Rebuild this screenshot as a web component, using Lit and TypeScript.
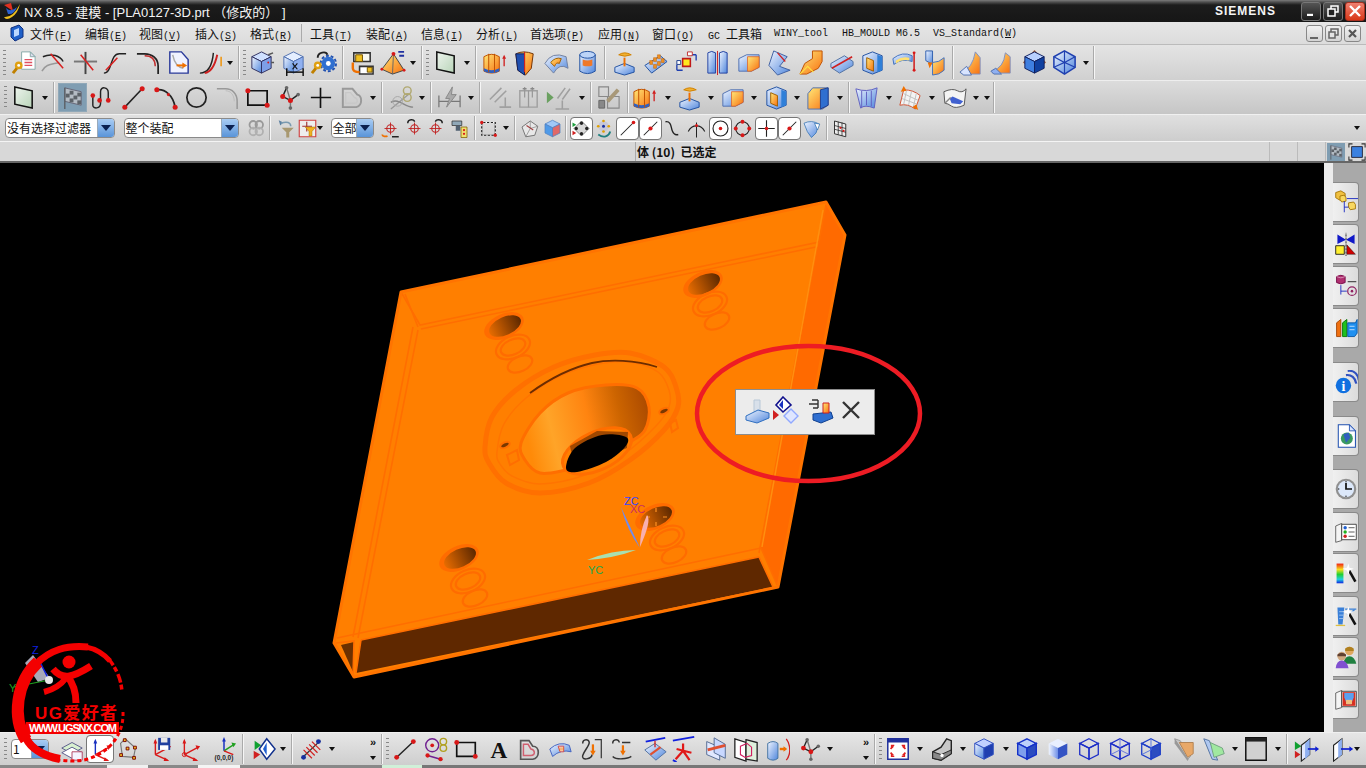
import { LitElement, html, svg, css } from 'lit';
import { customElement } from 'lit/decorators.js';

const ln = (d: string, c = '#222', w = 1.5) => svg`<path d=${d} fill="none" stroke=${c} stroke-width=${w}/>`;
const fl = (d: string, c: string, s = 'none', w = 1) => svg`<path d=${d} fill=${c} stroke=${s} stroke-width=${w}/>`;
const dot = (x: number, y: number, r = 2, c = '#d81818') => svg`<circle cx=${x} cy=${y} r=${r} fill=${c}/>`;
const cube = (t: string, l: string, r: string, s = '#2030b0', w = 1) => svg`
  ${fl('M14 3 24 8 14 13 4 8Z', t, s, w)}${fl('M4 8 14 13V25L4 20Z', l, s, w)}${fl('M24 8 14 13V25L24 20Z', r, s, w)}`;
const key = svg`${dot(8, 17, 4, '#e0a010')}${dot(8, 17, 1.5, '#fff')}${ln('M6 20 2 25', '#c08000', 3)}`;
const plane = svg`${fl('M5 3 23 7V25L5 21Z', 'url(#gn)', '#111', 1.6)}`;
const sel = svg`${ln('M14 6V22M6 14H22', '#c02020', 1.2)}<circle cx="14" cy="14" r="5" fill="none" stroke="#c02020" stroke-width="1.4"/>`;
const extrude = svg`${fl('M3 8Q11 3 19 8V23Q11 27 3 23Z', 'url(#or)', '#c05000')}${fl('M3 23Q11 27 19 23V20Q11 24 3 20Z', '#3060c0')}${ln('M8 5V24M14 5V24', '#c05000', 1)}${ln('M24 18V8', '#d02020', 1.4)}${fl('M22 10 24 6 26 10Z', '#d02020')}`;
const boss = svg`${fl('M4 19 14 15 24 19V24L14 27 4 24Z', 'url(#bl)', '#2050a0')}${fl('M8 6Q14 2 21 6 14 9 8 6Z', '#f0b030', '#d08000')}${ln('M14 18V9', '#f07000', 2)}`;
const shell = svg`${fl('M14 3 24 7V22L14 26 4 22V7Z', 'url(#bl)', '#2050a0')}${fl('M8 9 15 12V23L8 20Z', 'url(#or)', '#a06000')}${fl('M19 6 24 8V22L19 24Z', '#2f7fd8')}`;
const offset = svg`${fl('M4 10 12 6H25V19L17 23H4Z', 'url(#bl)', '#5070b0')}${fl('M13 8H25V19L17 23H13Z', 'url(#or)', '#e06020', .8)}`;
const lface = svg`${fl('M5 22Q16 20 18 4L23 8V25H5Z', 'url(#or)', '#8090c0')}${fl('M3 23 8 20 14 26H6Z', '#90b0f0', '#5070b0')}`;
const triad = (x = '#d81818', y = '#d81818', z = '#d81818') => svg`${ln('M9 20V5', z, 1.5)}${fl('M7 8 9 3 11 8Z', z)}${ln('M9 20 24 12', y, 1.5)}${fl('M21 10 26 11 23 15Z', y)}${ln('M9 20 22 26', x, 1.5)}${fl('M19 23 24 27 18 27Z', x)}`;
const zig = svg`${ln('M12 4 8 13 16 17 24 11', '#222', 1.5)}${ln('M12 4 16 17 16 25', '#777', 1.5)}${dot(8, 13, 2.6)}${dot(16, 17, 2.6)}${dot(12, 4, 1.9, '#666')}${dot(24, 11, 1.9, '#666')}${dot(16, 25, 1.9, '#666')}`;
const door = (c: unknown) => svg`${fl('M2 7 9 4V24L2 26Z', '#f4f4f4', '#555')}${fl('M9 5H26V23H9Z', '#fff', '#333')}${c}`;
const wand = svg`${ln('M17 10 25 24', '#111', 3)}${fl('M17 3 18 8 23 9 18 11 17 16 15 11 10 9 15 8Z', '#fff')}`;

const I: Record<string, unknown> = {
  keysheet: svg`${fl('M11 3H20L25 8V21H11Z', '#fff', '#8aa')}${fl('M20 3V8H25Z', '#dde', '#8aa')}${ln('M14 11H22M14 14H22M14 17H22', '#e05060', 1.4)}${key}`,
  trim1: svg`${ln('M3 8C12 4 21 7 24 13')}${ln('M2 23C6 15 13 16 20 14', '#999')}${ln('M11 5 24 20', '#d82020', 1.6)}`,
  trim2: svg`${ln('M14 3V26', '#444', 2)}${ln('M2 13H26', '#777', 2)}${ln('M9 6 22 22', '#d82020', 1.6)}`,
  trim3: svg`${ln('M3 25C12 25 9 5 19 5H26')}${ln('M5 22 17 9', '#d82020', 1.6)}`,
  fillet: svg`${ln('M2 5H10C18 5 24 10 24 18V26', '#222', 1.8)}${ln('M10 7C17 7 21 11 21 18', '#c03030')}`,
  sketchp: svg`${fl('M5 3H17L24 11V25H5Z', '#f0f2ff', '#2a3a9a', 1.5)}${ln('M8 6C10 16 14 19 19 20', '#aaa')}${ln('M12 17H19', '#f07000', 2)}${fl('M18 14 23 17 18 20Z', '#f07000')}`,
  curveoff: svg`${ln('M3 25C12 25 16 15 17 4')}${ln('M8 25C15 24 19 15 21 6', '#d02020', 2)}${ln('M25 8V18', '#f09000', 1.5)}`,
  cubeedit: svg`${cube('#cfe0ff', 'url(#bl)', '#7d9fe8', '#303060')}${ln('M21 6 26 4M24 14H27', '#555')}${dot(21, 14, 1)}`,
  cubedim: svg`${cube('#e4eeff', 'url(#bl)', '#8fb0f0', '#5070b0')}${ln('M7 24H24', '#111')}${ln('M7 20V28M24 20V28', '#111', 1.5)}${ln('M13 15 18 21M18 15 13 21', '#111', 1.2)}`,
  gearkey: svg`${dot(19, 15, 7, '#2f6fd0')}${dot(19, 15, 2.5, '#fff')}<circle cx="19" cy="15" r="8" fill="none" stroke="#2050b0" stroke-width="2" stroke-dasharray="3 2"/>${key}${ln('M8 9C8 3 17 2 18 6', '#222', 2)}`,
  paste: svg`${fl('M6 4H23V13H6Z', '#f8f8f0', '#333', 1.6)}${fl('M8 6H15V13H8Z', '#f0c020', '#705000')}${fl('M12 18H26V26H12Z', '#fff', '#333', 1.6)}${fl('M20 19H25V24H20Z', '#f0c020', '#705000')}${ln('M5 14V20C5 23 8 24 12 24', '#f07000', 2.5)}`,
  pyramid: svg`${fl('M15 5 26 22 14 26 3 21Z', 'url(#or)', '#444')}${ln('M15 5 14 26', '#666', 1)}${dot(15, 5, 2)}${dot(3, 21, 1.5)}${dot(26, 22, 1.5)}${ln('M20 3H26M21 7H26', '#2030a0', 2)}`,
  plane,
  extrude,
  revolve: svg`${fl('M4 5Q12 1 22 5L20 20 14 27 6 22Z', 'url(#or)', '#703000')}${fl('M4 5H13V27L6 22Z', '#2050b0', '#102060')}${ln('M13 3V24', '#d02020', 1.2)}`,
  sweepf: svg`${fl('M3 15Q10 2 25 8L27 20Q18 14 12 25Z', 'url(#bl)', '#7080a0')}${fl('M9 14Q14 8 20 10L18 15Q15 13 13 18Z', 'url(#or)', '#a06000')}`,
  cyl: svg`${fl('M6 6Q14 1 22 6V23Q14 28 6 23Z', 'url(#bl)', '#2050a0')}<ellipse cx="14" cy="6" rx="8" ry="3.5" fill="#bcd4f8" stroke="#2050a0"/>${fl('M9 11Q14 13 19 11V17Q14 19 9 17Z', '#f07828')}`,
  boss,
  pads: svg`${fl('M3 17 19 7 26 13 10 25Z', 'url(#bl)', '#2050a0')}${[[8, 13], [12, 10], [16, 7], [12, 17], [16, 14], [20, 11]].map(([x, y]) => svg`${fl(`M${x} ${y + 3}V${y - 1}H${x + 3}V${y + 3}Z`, '#f09020', '#c06000', .5)}`)}`,
  pattern: svg`${fl('M10 10H18V18H10Z', '#ffe820', '#c01818', 1.6)}${ln('M4 22V16M4 22H10M24 6V12M24 6H18', '#2040b0', 1.4)}${fl('M15 3H20V7H15Z', '#fff', '#c03030')}${fl('M4 12H8V16H4Z', '#fff', '#204090')}`,
  mirror: svg`${fl('M4 4Q8 1 12 4V25H4Z', 'url(#bl)', '#2040a0')}${fl('M16 4Q20 1 24 4V25H16Z', 'url(#bl)', '#2040a0')}${ln('M14 2V27', '#d02020', 1)}`,
  offset,
  sweep: svg`${fl('M8 2 22 8 14 18 25 22 12 27 3 17Z', 'url(#bl)', '#4060a0')}${ln('M12 4 20 13', '#d02020', 1.4)}`,
  orangel: svg`${fl('M15 2H25V13L21 20 9 26 2 26 7 15 15 10Z', 'url(#or)', '#c05000')}${ln('M2 26 10 18 16 24', '#ffe040', 1.2)}`,
  platecut: svg`${fl('M3 15 17 7 26 13V17L12 25 3 19Z', 'url(#bl)', '#5070a0')}${ln('M4 20 25 8', '#d02020', 1.6)}`,
  shell,
  tworib: svg`${fl('M3 10Q13 2 23 7V13Q13 9 4 16Z', 'url(#bl)', '#4070c0')}${fl('M6 12Q13 7 20 9V12Q13 10 6 15Z', '#ffe070')}${ln('M25 4V22', '#d02020', 1.6)}${dot(25, 4, 1.5)}${dot(25, 22, 1.5)}`,
  sheet: svg`${fl('M6 2H13V16L6 12Z', 'url(#bl)', '#3060b0')}${fl('M13 14Q20 14 25 9V22Q20 27 13 27Z', 'url(#or)', '#4070c0')}${fl('M8 14H13L10 20Z', '#f07000')}`,
  cface1: svg`${fl('M5 24Q16 20 19 3L24 9V26H10Z', 'url(#or)', '#8090c0')}${fl('M3 24 10 18 15 27H7Z', '#d8e4ff', '#5070b0')}`,
  cface2: lface,
  cubed: svg`${fl('M14 2 25 14 14 22 3 14Z', 'none', '#a06040', 1.4)}${cube('#b8d0ff', '#3f7fe0', '#1040a0', '#102060')}`,
  globe: svg`${fl('M14 2 25 8V19L14 26 3 19V8Z', 'url(#bl)', '#2040b0', 1.6)}${ln('M3 8 14 14 25 8M14 14V26M3 19 14 14 25 19M14 2V14', '#2040b0', 1.2)}`,
  checker: svg`${fl('M6 4 23 8V22L6 18Z', '#b4bcc4', '#667')}${[0, 1, 2, 3].flatMap((a) => [0, 1, 2].map((b) => svg`${(a + b) % 2 ? fl(`M${7 + a * 4} ${6 + b * 4 + a}h4v4h-4z`, '#5c6268') : ''}`))}${ln('M6 4V26', '#5c6268', 1.5)}`,
  scurve: svg`${ln('M5 12V22C5 26 13 26 13 20V8C13 2 21 3 21 9V18')}${dot(5, 12, 2.4)}${dot(12, 17, 2.4)}${dot(21, 17, 2.4)}`,
  line: svg`${ln('M5 24 23 5', '#222', 1.6)}${dot(5, 24, 2.6)}${dot(23, 5, 2.6)}`,
  arc: svg`${ln('M5 6C14 5 22 12 24 24', '#222', 1.8)}${dot(5, 6, 2.6)}${dot(24, 24, 2.6)}${dot(17, 11, 1.6)}`,
  circle: svg`<circle cx="14" cy="14" r="10" fill="none" stroke="#222" stroke-width="1.8"/>`,
  filletg: svg`${ln('M3 5H12C19 5 24 10 24 18V26', '#999', 1.6)}${ln('M12 7C17 7 21 11 21 18', '#bbb', 1)}`,
  rect: svg`${fl('M4 7H24V22H4Z', 'none', '#111', 1.8)}${dot(4, 7, 2.6)}${dot(24, 22, 2.6)}`,
  zig,
  plus: svg`${ln('M14 4V25M4 14H25', '#111', 1.7)}`,
  heartg: svg`${fl('M5 5H15L20 11C25 12 26 22 19 24H5Z', 'none', '#999', 2)}${fl('M8 9H13L17 14C21 15 21 20 17 20H8Z', 'none', '#c8c8c8', 1.4)}`,
  constrg: svg`${ln('M3 26 22 10', '#999', 1.4)}${ln('M3 19C11 14 17 24 26 24', '#888')}<circle cx="20" cy="7" r="4" fill="none" stroke="#b0a870" stroke-width="1.5"/><circle cx="20" cy="14" r="4" fill="none" stroke="#b0a870" stroke-width="1.5"/><circle cx="10" cy="18" r="5" fill="none" stroke="#a8a8a8"/>`,
  dimg: svg`${ln('M3 12V24M25 12V24M3 18H25', '#777', 1.3)}${fl('M17 3 10 15H14L11 24 21 11H16Z', '#aaa', '#888')}`,
  parg: svg`${ln('M4 16 16 4M9 19 21 7M14 24H26M20 24V14', '#a0a0a0', 1.6)}`,
  symg: svg`${fl('M5 7H23V24H5Z', 'none', '#a0a0a0', 1.5)}${ln('M10 3V14M18 3V14M14 7V24', '#999', 1.3)}${ln('M8 5H12M16 5H20', '#888')}`,
  autog: svg`${fl('M3 8 10 14 3 20Z', '#6aa060')}${ln('M14 15 22 4M19 16 27 5M12 26H26M19 26V17', '#a0a0a0', 1.6)}`,
  convg: svg`${fl('M4 3H14V13H4Z', 'none', '#888', 1.2)}${fl('M13 13H25V25H13Z', 'none', '#888', 1.2)}${fl('M4 17H10V25H4Z', '#888', '#666')}${ln('M13 18 24 6', '#a89878', 4)}`,
  cubeface: svg`${fl('M3 10 8 4H24V22L18 26H3Z', 'url(#or)', '#5070b0')}${fl('M16 6 24 4V22L16 26Z', '#2f6fd0', '#204090')}`,
  ruled: svg`${fl('M3 5Q14 9 25 4L22 25Q12 21 8 25Z', 'url(#bl)', '#6060c0')}${ln('M9 7V24M14 8V22M19 7V23', '#6060c0', 1)}`,
  grid: svg`${fl('M8 6Q18 6 25 12L20 26Q12 20 4 22Z', '#f4f4f4', '#d05030')}${ln('M8 10 23 17M6 15 22 21M11 6 8 21M16 8 13 22M21 10 18 24', '#c0c0c0', 1)}${fl('M5 8 8 2 11 7Z', '#f07000')}${fl('M17 24 23 27 21 21Z', '#f07000')}`,
  surf: svg`${fl('M3 8Q12 4 17 7T26 5L24 22Q15 26 11 23T4 20Z', '#f4f4f4', '#555')}${fl('M9 15 12 13 23 18 20 21 11 20Z', '#4060d0')}${ln('M4 20 10 14', '#888')}`,
  filterg: svg`<circle cx="11" cy="9" r="5" fill="none" stroke="#999" stroke-width="2.4"/><circle cx="19" cy="9" r="5" fill="none" stroke="#999" stroke-width="2.4"/><circle cx="11" cy="18" r="5" fill="none" stroke="#b0b0b0" stroke-width="2.4"/><circle cx="19" cy="18" r="5" fill="none" stroke="#b0b0b0" stroke-width="2.4"/>`,
  undof: svg`${fl('M5 3 11 6 7 10Z', '#5a7fa0')}${ln('M8 7C16 4 21 6 21 11', '#7a9ab0', 2)}${fl('M9 13H25L19 19V26H15V19Z', '#a89870')}`,
  snapf: svg`${fl('M3 3H25V25H3Z', '#eee', '#d04040', 1.5)}${ln('M7 11H20M13 5V18', '#a03030')}${fl('M11 12H25L20 18V24H16V18Z', '#f0b020', '#a07000', .6)}`,
  sel1: svg`${sel}${ln('M3 22C3 25 8 25 10 24', '#f07000', 2.4)}${ln('M16 25H25', '#222', 2)}`,
  sel2: svg`${sel}${ln('M5 7C5 1 14 1 14 5', '#222', 2)}`,
  sel3: svg`${sel}${ln('M23 7C23 1 14 1 14 5', '#222', 2)}`,
  assy: svg`${fl('M4 4H17V10H4Z', '#90a8b8', '#333')}${fl('M9 10H15V17H9Z', '#506070')}${fl('M16 12H24V26H16Z', '#f0e070', '#806000')}${dot(20, 16, 1.5)}${dot(20, 21, 1.5)}`,
  box: svg`${fl('M5 6H23V23H5Z', 'none', '#222', 1.6)}<path d="M5 6H23V23H5Z" fill="none" stroke="#fff" stroke-width="1.6" stroke-dasharray="2 3"/>${dot(5, 6, 2.2)}${dot(23, 23, 2.2)}`,
  sphere: svg`${fl('M4 12 15 4 25 11 21 23 9 25Z', '#e8e8e8', '#555')}${ln('M15 4 15 14 9 25M15 14 25 11', '#888', 1)}${ln('M10 10 19 16', '#a04040', 1.5)}`,
  bluebox: svg`${cube('#a0c8f8', '#4f9ae8', '#e06868', '#5080c0')}`,
  snapall: svg`${fl('M14 4 24 14 14 24 4 14Z', '#d8d8d8', '#666')}${dot(14, 7, 2.2, '#222')}${dot(14, 21, 2.2, '#222')}${dot(7, 14, 2.2, '#222')}${dot(21, 14, 2.2, '#222')}${fl('M2 6 7 9 2 12Z', '#20a040')}${fl('M2 17 7 20 2 23Z', '#d02020')}`,
  snapreset: svg`${dot(14, 11, 7, '#c8c8d8')}${dot(14, 11, 2, '#1830a0')}${dot(14, 4, 1.8, '#e0a000')}${dot(21, 11, 1.8, '#e0a000')}${dot(14, 18, 1.8, '#e0a000')}${dot(7, 11, 1.8, '#e0a000')}${ln('M7 22C14 27 21 25 23 18', '#208080', 2.4)}`,
  linesnap: svg`${ln('M5 23 22 6', '#222', 1.4)}${dot(22, 6, 2.4)}`,
  midsnap: svg`${ln('M5 23 23 5', '#222', 1.4)}${dot(14, 14, 2.8)}`,
  curve: svg`${ln('M6 5C14 4 13 12 15 17S20 23 23 22', '#222', 1.8)}`,
  tang: svg`${ln('M14 6V26', '#222', 1.4)}${ln('M3 18C8 8 20 8 25 18', '#222', 1.4)}${dot(14, 10, 2)}`,
  center: svg`<circle cx="14" cy="14" r="10" fill="#fff" stroke="#222" stroke-width="1.5"/>${dot(14, 14, 2.4)}`,
  quad: svg`<circle cx="14" cy="14" r="9" fill="none" stroke="#222" stroke-width="1.5"/>${dot(14, 5, 2.6)}${dot(14, 23, 2.6)}${dot(5, 14, 2.6)}${dot(23, 14, 2.6)}`,
  inter: svg`${ln('M14 3V25M3 14H25', '#222', 1.5)}${dot(14, 14, 2.4)}`,
  face: svg`${fl('M4 7Q14 2 24 8L20 20 14 26Q8 20 4 7Z', 'url(#bl)', '#3070b0')}${fl('M18 7 25 8 22 16Z', '#fff', '#3070b0')}`,
  gridp: svg`${fl('M6 4 21 8V25L6 21Z', '#eee', '#222', 1.2)}${ln('M11 5V22M16 6V24M6 10 21 14M6 15 21 19', '#222', 1)}${dot(14, 13, 1.5)}${dot(18, 17, 1.5)}`,
  layers: svg`${fl('M3 13 14 7 25 13 14 19Z', '#d8f0d0', '#558')}${fl('M3 18 14 12 25 18 14 24Z', '#fff', '#558')}${fl('M14 17H25V26H14Z', '#f4f4ff', '#b04060')}`,
  wcsmove: svg`${triad('#e01818', '#e01818', '#1830c0')}`,
  wcsnet: svg`${fl('M6 8 11 3 22 13 20 23 8 22Z', 'none', '#777', 1.2)}${fl('M9 3H12V6H9ZM20 11H23V14H20ZM19 22H22V25H19ZM5 19H8V22H5ZM12 12H15V15H12Z', '#f0c020', '#700')}`,
  wcssave: svg`${triad()}${fl('M12 2H25V15H12Z', '#2040a0')}${fl('M15 2H22V7H15Z', '#e8e8e8')}${fl('M14 10H23V15H14Z', '#fff')}`,
  wcsorient: svg`${triad()}<circle cx="9" cy="20" r="2.2" fill="none" stroke="#d81818"/>`,
  wcsabs: svg`${ln('M14 16V4', '#1830c0', 1.6)}${fl('M12 6 14 1 16 6Z', '#1830c0')}${ln('M14 16 25 9', '#20a020', 1.6)}${fl('M22 7 27 8 24 12Z', '#20a020')}${ln('M14 16 24 20', '#d81818', 1.4)}<text x="14" y="26" text-anchor="middle" font-size="7" font-weight="700" font-family="Liberation Sans" fill="#222">(0,0,0)</text>`,
  flipv: svg`${fl('M5 5 12 10 5 15Z', '#10a030')}${fl('M4 16 11 20 4 25Z', '#d02020')}${fl('M18 3 27 14 18 25 10 14Z', '#fff', '#10308c', 1.6)}${fl('M18 7 14 14 18 21Z', '#2060d0')}`,
  hatch: svg`${ln('M4 24 24 5', '#333', 1.4)}${ln('M6 15 15 24M9 12 18 21M12 9 21 18M15 6 24 15', '#d02020', 1.3)}${dot(6, 23, 2.6, '#1830a0')}${dot(22, 6, 2.6, '#1830a0')}`,
  linep: svg`${ln('M4 24 24 5', '#222', 1.5)}${dot(5, 23, 2.6)}${dot(23, 6, 2.6)}`,
  sketchc: svg`<circle cx="11" cy="10" r="7" fill="none" stroke="#702090" stroke-width="1.5"/>${dot(11, 10, 2)}<circle cx="23" cy="6" r="3.5" fill="none" stroke="#b0a020" stroke-width="1.5"/><circle cx="23" cy="13" r="3.5" fill="none" stroke="#b0a020" stroke-width="1.5"/>${ln('M6 21 20 25', '#702090', 1.6)}${dot(6, 21, 2.3)}${dot(20, 25, 2.3)}`,
  letterA: svg`<text x="14" y="24" text-anchor="middle" font-family="Liberation Serif" font-weight="700" font-size="25" fill="#111">A</text>`,
  heart: svg`${fl('M5 5H14L18 11C26 11 26 24 18 25H5Z', 'none', '#555', 1.8)}${fl('M8 9H13L16 14C21 15 21 21 16 21H8Z', 'none', '#d06070', 1.6)}`,
  flag: svg`${fl('M3 14Q13 5 24 10L26 17Q15 14 6 22Z', 'url(#bl)', '#4060c0')}${fl('M12 11 18 11 18 17 14 17Z', '#fff', '#d04040')}${ln('M13 13H18M13 15H18', '#f07000', 1)}`,
  split1: svg`${ln('M4 8C4 3 11 3 11 7S6 15 4 21 14 25 14 20', '#333', 1.6)}${ln('M17 4H24V24', '#333', 1.3)}${ln('M15 9V18', '#f07000', 2.4)}${fl('M12 16 15 21 18 16Z', '#f07000')}`,
  split2: svg`${ln('M4 8C4 3 11 3 11 7', '#333', 1.6)}${ln('M14 7H23M4 22C8 26 20 25 24 22', '#333', 1.6)}${ln('M15 10V18', '#f07000', 2.4)}${fl('M12 16 15 21 18 16Z', '#f07000')}`,
  cutface: svg`${ln('M4 6 25 2', '#1020e0', 2)}${fl('M3 15 14 8 26 17 15 26Z', 'url(#bl)', '#5070a0')}${ln('M9 20 20 12', '#e05030', 2.4)}${ln('M14 5V12', '#d02020', 1.4)}`,
  cutcross: svg`${ln('M2 5 25 1', '#1020e0', 2)}${ln('M13 8V17M5 25 13 16 20 26M6 14 22 18', '#e01818', 2.4)}${ln('M2 26 6 28', '#1020e0', 2)}`,
  planes2: svg`${fl('M4 6 18 12V26L4 20Z', '#e0e8ff', '#506890')}${fl('M12 2 24 9V24L12 18Z', '#c8d8ff', '#506890')}${ln('M5 15 24 10', '#e05030', 3)}`,
  books2: svg`${fl('M2 3 14 7V27L2 23Z', '#fff', '#222', 1.4)}${fl('M14 4 26 7V27L14 25Z', '#dff0dc', '#222', 1.4)}${fl('M8 11 15 8 20 12V21L13 23 8 20Z', 'none', '#d02060', 1.2)}`,
  cyl2: svg`${fl('M4 8Q10 4 15 8V24Q10 28 4 24Z', 'url(#bl)', '#4070a0')}${ln('M17 14H23', '#f07000', 2.6)}${fl('M21 11 25 14 21 17Z', '#f07000')}${ln('M24 3C29 10 29 20 24 26', '#d02020', 1.4)}`,
  fit: svg`${fl('M3 3H25V25H3Z', '#fff', '#20309c', 1.6)}${fl('M3 3H25V7H3Z', '#20309c')}${ln('M9 11 6 14M19 11 22 14M9 21 6 18M19 21 22 18', '#e02020', 1.8)}${ln('M10 10H7V13M18 10H21V13M10 22H7V19M18 22H21V19', '#e02020', 1.4)}`,
  camera: svg`${fl('M4 17 13 12 19 3 24 5V19L13 26 4 24Z', '#c8c8c8', '#222', 1.5)}${fl('M4 17 13 20 24 15V19L13 26 4 24Z', '#888', '#222')}${dot(14, 21, 1.8, '#fff')}`,
  cubeshade: cube('#c0d0ff', 'url(#bl)', '#1f3fb0', '#3050c0'),
  cubeedges: cube('#bcd0fa', '#7f9fec', '#2b4cc0', '#1430c8', 1.5),
  cubenoedge: cube('#e8efff', 'url(#bl2)', '#3454c4', 'none'),
  cubewire: cube('none', 'none', 'none', '#1e2fc8', 1.4),
  cubelines: svg`${cube('none', 'none', 'none', '#1e2fc8', 1.4)}${ln('M14 3V15M4 20 14 15 24 20', '#6070e0', 1)}`,
  cubeghost: svg`${cube('none', 'none', '#2b4cc0', '#2040c8', 1.4)}${ln('M14 3V15M4 20 14 15', '#5070e0', 1)}`,
  sectiong: svg`${fl('M5 3 11 5 22 22 19 25 8 8Z', '#c8c8c8', '#999')}${fl('M10 7H25V19L19 23Z', '#e8a868', '#b08050')}${fl('M5 3V8L19 27 20 25 8 7Z', '#999')}`,
  sectionb: svg`${fl('M3 3 9 5 18 26 12 25Z', '#b0c8f0', '#5070a0')}${fl('M10 7 23 13 25 19 14 23Z', '#a0e8a0', '#70a080')}`,
  colorbox: svg`${fl('M3 2H25V26H3Z', '#d0d0d0', '#111', 1.6)}${fl('M3 2H25V6H3Z', '#222')}`,
  fliphor: svg`${fl('M2 6 9 11 2 15Z', '#10a030')}${fl('M2 16 8 20 2 24Z', '#d02020')}${fl('M9 10 18 3V20L9 27Z', '#e0e8ff', '#222', 1.2)}${fl('M13 8 18 3V20L13 25Z', '#8fb0f0')}${ln('M16 14H27', '#1020d0', 1.8)}${fl('M24 11 28 14 24 17Z', '#1020d0')}`,
  slab: svg`${fl('M6 10 15 3V20L6 27Z', '#fff', '#222', 1.2)}${fl('M11 7 15 3V20L11 24Z', '#8fb0f0')}${ln('M14 14H26', '#1020d0', 1.8)}${fl('M23 11 27 14 23 17Z', '#1020d0')}`,
  // selection mini bar
  popprint: svg`${fl('M11 4H17V16H11Z', '#d8e0ea', '#b8c8d8')}${fl('M3 20 15 14 26 17V22L14 27 3 24Z', 'url(#bl)', '#2f6fc0')}`,
  popdiamond: svg`${fl('M12 1 20 9 12 16 5 9Z', '#fff', '#10108c', 1.6)}${fl('M12 4 8 9 12 13Z', '#1830c0')}${fl('M20 13 27 20 20 27 13 20Z', '#dfe6ff', '#90a8ff', 1.4)}${fl('M2 14 8 19 2 24Z', '#d02020')}`,
  poptree: svg`${ln('M2 8H11M5 4H11M6 12H11M11 4V12', '#333', 1.4)}${fl('M6 18 24 16 26 22 14 27 6 24Z', '#2f6fd0', '#104090')}${fl('M16 7H22V17H16Z', 'url(#or)', '#d02020')}`,
  popx: svg`${ln('M6 6 22 22M22 6 6 22', '#333', 2.4)}`,
  // side palette
  p1: svg`${fl('M2 3 8 1 13 4V10L7 12 2 9Z', '#f0c040', '#a07000')}${fl('M7 7 12 6 14 9V13L9 14 7 11Z', '#f8d860', '#a07000')}${fl('M17 15 23 14 25 17V22L19 23 17 20Z', '#f8d860', '#a07000')}${ln('M15 10H28M12 13V26M12 20H17', '#1020c0', 1)}`,
  p2: svg`${fl('M4 3 14 9 4 14ZM24 3 14 9 24 14Z', '#1018c8')}${ln('M14 1V28', '#111', 1)}<path d="M14 1V28" stroke="#fff" stroke-width="1" stroke-dasharray="2 2"/>${fl('M2 16H12V26H2Z', '#fff030', '#111', 1)}${fl('M15 15 25 26H15Z', '#d00000', '#111', .5)}`,
  p3: svg`${fl('M3 3Q8 0 13 3V10Q8 13 3 10Z', '#b03070', '#700040')}${ln('M3 3Q8 6 13 3', '#e0a0c0', 1)}${ln('M16 9H26', '#111', 1)}${ln('M8 13V24M8 20H15', '#1020c0', 1)}<circle cx="21" cy="20" r="5" fill="none" stroke="#902060" stroke-width="1.4"/>${dot(21, 20, 1.5, '#902060')}`,
  p4: svg`${fl('M3 8 8 4V24H3Z', '#f07010', '#a04000')}${fl('M10 8 15 4V24H10Z', '#20c020', '#007000')}${fl('M16 8H25L27 4V20L24 24H16Z', '#2090f0', '#0050a0')}${ln('M18 12H24M18 16H24', '#d0e8ff', 1)}`,
  p5: svg`${ln('M14 6C20 5 25 9 26 16', '#3050c0', 2.6)}${ln('M16 1C24 0 28 6 29 12', '#3050c0', 2.6)}${dot(11, 18, 9, '#1070e0')}<text x="11" y="24" text-anchor="middle" font-family="Liberation Serif" font-weight="700" font-size="16" fill="#fff">i</text>`,
  p6: svg`${fl('M5 1H18L25 8V27H5Z', '#fff', '#2050b0', 1.2)}${fl('M18 1V8H25Z', '#d8e4ff', '#2050b0')}${dot(15, 17, 7, '#3a9a60')}${fl('M11 12 17 10 19 16 14 22Z', '#3060c0')}`,
  p7: svg`${dot(14, 14, 12, '#909090')}${dot(14, 14, 9.5, '#dce8fa')}${ln('M14 7V14H21', '#111', 2)}${dot(14, 5.5, .8, '#222')}${dot(14, 22.5, .8, '#222')}${dot(5.5, 14, .8, '#222')}`,
  p8: door(svg`${dot(13, 9, 2, '#2060d0')}${dot(13, 14, 2, '#20b020')}${dot(13, 19, 2, '#d02020')}${ln('M17 9H24M17 14H24M17 19H24', '#444', 1)}`),
  p9: svg`<rect x="3" y="3" width="8" height="23" fill="url(#rain)"/>${wand}`,
  p10: svg`${fl('M4 4H12L10 24H5Z', '#3a80d8')}${ln('M6 9H11M6 13H11M6 17H11', '#aac8f0', 1)}${ln('M13 6H26M15 12 24 7', '#3a80d8', 1.4)}${ln('M2 25H13', '#e0c040', 1.5)}${wand}`,
  p11: svg`${dot(18, 7, 5, '#e0a860')}${fl('M13 4Q18 0 23 4L23 7H13Z', '#b08020')}${fl('M11 22Q12 13 18 13T26 22Z', '#208040')}${dot(9, 13, 5, '#d0a880')}${fl('M4 11Q9 7 14 11L14 13H4Z', '#604030')}${fl('M2 27Q3 18 9 18T17 27Z', '#8050d0')}`,
  p12: door(svg`${fl('M10 6H25V22H10Z', '#d83020')}${fl('M12 7H23V12L20 20H15L12 12Z', '#5aa0f0')}${fl('M14 15H21V20H14Z', '#f0c080')}`),
};

type Item = [number, string];

const ROW1: Item[] = [[4, 'grip'], [24, 'keysheet'], [53, 'trim1'], [85, 'trim2'], [114, 'trim3'], [148, 'fillet'], [178, 'sketchp'], [210, 'curveoff'], [230, 'dd'], [239, 'sep'], [244, 'grip'], [261, 'cubeedit'], [293, 'cubedim'], [323, 'gearkey'], [343, 'sep'], [361, 'paste'], [392, 'pyramid'], [413, 'dd'], [422, 'sep'], [427, 'grip'], [445, 'plane'], [467, 'dd'], [476, 'sep'], [494, 'extrude'], [525, 'revolve'], [555, 'sweepf'], [587, 'cyl'], [605, 'sep'], [624, 'boss'], [655, 'pads'], [686, 'pattern'], [717, 'mirror'], [748, 'offset'], [779, 'sweep'], [811, 'orangel'], [841, 'platecut'], [872, 'shell'], [903, 'tworib'], [933, 'sheet'], [953, 'sep'], [970, 'cface1'], [1001, 'cface2'], [1034, 'cubed'], [1064, 'globe'], [1086, 'dd'], [1094, 'sep']];
const ROW2: Item[] = [[5, 'grip'], [23, 'plane'], [45, 'dd'], [54, 'sep'], [72, '@checker'], [101, 'scurve'], [133, 'line'], [165, 'arc'], [196, 'circle'], [227, 'filletg'], [257, 'rect'], [288, 'zig'], [320, 'plus'], [351, 'heartg'], [373, 'dd'], [382, 'sep'], [401, 'constrg'], [422, 'dd'], [431, 'sep'], [449, 'dimg'], [471, 'dd'], [480, 'sep'], [499, 'parg'], [528, 'symg'], [557, 'autog'], [582, 'dd'], [591, 'sep'], [608, 'convg'], [628, 'sep'], [644, 'extrude'], [668, 'dd'], [689, 'boss'], [711, 'dd'], [732, 'offset'], [754, 'dd'], [776, 'shell'], [797, 'dd'], [818, 'cubeface'], [840, 'dd'], [849, 'sep'], [866, 'ruled'], [889, 'dd'], [909, 'grid'], [932, 'dd'], [954, 'surf'], [976, 'dd'], [987, 'dd'], [994, 'sep']];
const ROW3: Item[] = [[60, 'c:没有选择过滤器:110'], [181, 'c:整个装配:115'], [255, 'filterg'], [270, 'sep'], [285, 'undof'], [307, 'snapf'], [320, 'dd'], [352, 'c:全部:43'], [390, 'sel1'], [414, 'sel2'], [435, 'sel3'], [459, 'assy'], [475, 'sep'], [488, 'box'], [506, 'dd'], [515, 'sep'], [529, 'sphere'], [552, 'bluebox'], [566, 'sep'], [581, '#snapall'], [603, 'snapreset'], [627, '#linesnap'], [650, '#midsnap'], [671, 'curve'], [696, 'tang'], [720, '#center'], [742, 'quad'], [766, '#inter'], [789, '#midsnap'], [811, 'face'], [827, 'sep'], [840, 'gridp'], [1357, 'dd']];
const ROWB: Item[] = [[5, 'grip'], [30, 'c:1:38'], [72, 'layers'], [100, '#wcsmove'], [128, 'wcsnet'], [160, 'wcssave'], [189, 'wcsorient'], [224, 'wcsabs'], [243, 'sep'], [263, 'flipv'], [283, 'dd'], [292, 'sep'], [311, 'hatch'], [332, 'dd'], [373, 'more'], [382, 'sep'], [387, 'grip'], [405, 'linep'], [435, 'sketchc'], [466, 'rect'], [499, 'letterA'], [529, 'heart'], [560, 'flag'], [592, 'split1'], [622, 'split2'], [655, 'cutface'], [684, 'cutcross'], [716, 'planes2'], [746, 'books2'], [777, 'cyl2'], [809, 'zig'], [830, 'dd'], [866, 'more'], [875, 'sep'], [880, 'grip'], [898, 'fit'], [920, 'dd'], [942, 'camera'], [963, 'dd'], [984, 'cubeshade'], [1006, 'dd'], [1027, 'cubeedges'], [1058, 'cubenoedge'], [1089, 'cubewire'], [1120, 'cubelines'], [1151, 'cubeghost'], [1183, 'sectiong'], [1214, 'sectionb'], [1235, 'dd'], [1256, 'colorbox'], [1278, 'dd'], [1287, 'sep'], [1306, 'fliphor'], [1341, 'slab'], [1357, 'dd']];
const POP: Item[] = [[21, 'popprint'], [49, 'popdiamond'], [85, 'poptree'], [115, 'popx']];

const MENU: [number, string][] = [[30, '文件(F)'], [85, '编辑(E)'], [139, '视图(V)'], [195, '插入(S)'], [250, '格式(R)'], [310, '工具(T)'], [366, '装配(A)'], [421, '信息(I)'], [476, '分析(L)'], [530, '首选项(P)'], [598, '应用(N)'], [652, '窗口(O)'], [708, 'GC 工具箱'], [774, 'WINY_tool'], [842, 'HB_MOULD M6.5'], [933, 'VS_Standard(W)']];

const TABS: [number, string][] = [[182, 'p1'], [224, 'p2'], [266, 'p3'], [308, 'p4'], [362, 'p5'], [416, 'p6'], [469, 'p7'], [512, 'p8'], [553, 'p9'], [596, 'p10'], [637, 'p11'], [679, 'p12']];

const WIDTHS: Record<string, number> = { dd: 8, sep: 2, grip: 3, more: 14 };

const smooth = (p: number[][]) => {
  const n = p.length;
  let d = `M${p[0][0]} ${p[0][1]}`;
  for (let i = 0; i < n; i++) {
    const [a, b, c, e] = [p[(i + n - 1) % n], p[i], p[(i + 1) % n], p[(i + 2) % n]];
    d += `C${b[0] + (c[0] - a[0]) / 6} ${b[1] + (c[1] - a[1]) / 6} ${c[0] - (e[0] - b[0]) / 6} ${c[1] - (e[1] - b[1]) / 6} ${c[0]} ${c[1]}`;
  }
  return d + 'Z';
};

const FLANGE = [[485, 447], [492, 417], [516, 390], [554, 367], [595, 355], [630, 353], [664, 367], [676, 387], [678, 407], [664, 430], [630, 460], [589, 483], [540, 493], [506, 483], [489, 463]];
const FLANGE2 = [[497, 452], [504, 424], [526, 398], [560, 376], [598, 364], [630, 362], [658, 372], [669, 390], [669, 407], [656, 426], [624, 454], [585, 475], [540, 484], [512, 476], [500, 464]];
const CONE = [[521, 443], [540, 413], [568, 393], [606, 385], [637, 388], [649, 407], [645, 430], [630, 442], [597, 462], [566, 470], [540, 473], [525, 460]];
const BORE = [[566, 468], [575, 448], [602, 435], [626, 437], [625, 447], [606, 462], [577, 472]];

const rings = (x: number, y: number) => svg`
  <g fill="none" stroke="#ff6c00" stroke-width="2.2">
    <ellipse cx=${x} cy=${y} rx="18" ry="11" transform="rotate(-24 ${x} ${y})"/>
    <ellipse cx=${x} cy=${y} rx="13" ry="7.5" transform="rotate(-24 ${x} ${y})"/>
    <ellipse cx=${x + 7} cy=${y + 17} rx="13" ry="7.5" transform="rotate(-24 ${x + 7} ${y + 17})"/>
  </g>`;

const hole = (x: number, y: number) => svg`
  <ellipse cx=${x} cy=${y} rx="21" ry="12" transform="rotate(-24 ${x} ${y})" fill="#ff6c00"/>
  <ellipse cx=${x + 1} cy=${y} rx="17" ry="9" transform="rotate(-24 ${x + 1} ${y})" fill="url(#hole)"/>`;

@customElement('app-root')
export class AppRoot extends LitElement {
  static styles = css`
    :host { display: block; width: 1366px; height: 768px; overflow: hidden; font-family: 'Liberation Sans', 'Noto Sans CJK SC', sans-serif; }
    .app { position: relative; display: flex; flex-direction: column; width: 1366px; height: 768px; overflow: hidden; background: #000; }
    svg { display: block; flex: none; }

    .title { flex: none; height: 22px; display: flex; align-items: center; background: linear-gradient(#7c7c7c 0, #505050 2px, #1c1c1c 5px, #161616 100%); color: #fff; box-sizing: border-box; padding-left: 3px; }
    .title-text { margin-left: 3px; font-size: 13px; white-space: pre; flex: 1; color: #f4f4f4; }
    .siemens { font-weight: 700; font-size: 12px; letter-spacing: 1px; margin-right: 25px; color: #f4f4f4; }
    .winbtn { width: 20px; height: 19px; margin-right: 2px; border-radius: 3px; box-sizing: border-box; border: 1px solid #777; background: linear-gradient(#555, #1c1c1c); display: flex; align-items: center; justify-content: center; }
    .winbtn.close { background: linear-gradient(#f08070, #d83818); border-color: #a83020; margin-right: 1px; }

    .menu { flex: none; height: 23px; display: flex; align-items: center; background: linear-gradient(#e6e6e6, #dcdcdc); border-bottom: 1px solid #bbb; box-sizing: border-box; }
    .menu-logo { margin-left: 6px; width: 20px; }
    .menu-gap { flex: none; width: 4px; }
    .menu-item { flex: none; white-space: nowrap; color: #111; font-family: 'Liberation Mono', monospace; font-size: 10px; }
    .zh { font-family: 'Noto Sans CJK SC', sans-serif; font-size: 12px; }
    .menu-sep { flex: none; width: 1px; height: 18px; background: #aaa; margin: 0 8px 0 -9px; }
    .mini { display: flex; gap: 2px; margin-left: auto; margin-right: 5px; }
    .mini span { width: 17px; height: 17px; border: 1px solid #888; border-radius: 3px; background: linear-gradient(#f2f2f2, #d4d4d4); display: flex; align-items: center; justify-content: center; box-sizing: border-box; }

    .row { flex: none; display: flex; align-items: center; box-sizing: border-box; }
    .r1 { height: 35px; --icon: 27px; background: linear-gradient(#e4e4e4, #d0d0d0); }
    .r2 { height: 34px; --icon: 27px; background: linear-gradient(#dcdcdc, #c6c6c6); border-top: 1px solid #eee; }
    .r3 { height: 27px; --icon: 21px; background: linear-gradient(#e0e0e0, #cdcdcd); border-top: 1px solid #f0f0f0; }
    .rb { height: 33px; --icon: 26px; background: linear-gradient(#e6e6e6, #cecece); border-top: 1px solid #f0f0f0; }
    .pop { height: 40px; --icon: 28px; }
    .cell { flex: none; display: flex; align-items: center; justify-content: center; height: 100%; }
    .cell svg { width: var(--icon); height: var(--icon); }
    .boxed svg { background: #fff; outline: 1px solid #777; border-radius: 3px; }
    .active svg { background: #7f9db2; outline: 1px solid #90a8b8; }
    .sep { background: #f6f6f6; border-left: 1px solid #aaa; box-sizing: border-box; height: 92%; }
    .grip { background: repeating-linear-gradient(#888 0 1px, transparent 1px 4px); height: 70%; }
    .dd-arrow { width: 0; height: 0; border: 3.5px solid transparent; border-top: 4px solid #111; border-bottom: 0; }
    .more { flex-direction: column; justify-content: space-between; padding: 4px 0 5px; box-sizing: border-box; font-size: 11px; font-weight: 700; line-height: 10px; color: #111; }
    .combo { display: flex; height: 20px; box-sizing: border-box; border: 1px solid #8a8a8a; border-radius: 4px; background: #fff; overflow: hidden; align-items: stretch; }
    .combo .txt { flex: 1; font-family: 'Noto Sans CJK SC', sans-serif; font-size: 12px; line-height: 18px; padding-left: 1px; color: #111; white-space: nowrap; overflow: hidden; }
    .combo .btn { flex: none; width: 16px; background: linear-gradient(#a8ccf4, #5a94d8); display: flex; align-items: center; justify-content: center; border-left: 1px solid #9ab; }
    .combo .btn i { width: 0; height: 0; border: 5px solid transparent; border-top: 6px solid #0a2050; border-bottom: 0; }

    .status { flex: none; height: 22px; display: flex; align-items: stretch; background: #d8d8d8; border-top: 1px solid #f4f4f4; border-bottom: 2px solid #666; box-sizing: border-box; }
    .st-left { flex: none; width: 636px; border-right: 1px solid #aaa; box-sizing: border-box; }
    .st-msg { flex: 1; font-family: 'Noto Sans CJK SC', sans-serif; font-weight: 700; font-size: 12px; line-height: 19px; color: #111; white-space: pre; padding-left: 1px; }
    .st-cell { flex: none; width: 28px; border-left: 1px solid #bbb; box-sizing: border-box; }
    .st-icons { flex: none; width: 41px; display: flex; align-items: center; gap: 3px; padding-left: 1px; border-left: 1px solid #bbb; box-sizing: border-box; }
    .st-icons svg { width: 18px; height: 18px; }
    .st-icons .on { background: #7f9db2; }

    .main { flex: 1; min-height: 0; display: flex; }
    .scene { width: 1324px; height: 100%; background: #000; }
    .strip { flex: none; width: 9px; background: #ececec; }
    .palette { flex: 1; background: #a9a9a9; display: flex; flex-direction: column; align-items: flex-start; }
    .tab { flex: none; width: 26px; height: 40px; box-sizing: border-box; background: linear-gradient(90deg, #f0f0f0, #dcdcdc); border: 1px solid #8a8a8a; border-left: 0; border-radius: 0 4px 4px 0; display: flex; align-items: center; justify-content: center; }
    .tab svg { width: 24px; height: 24px; }

    .strip-b { flex: none; height: 3px; display: flex; background: #555; }
    .strip-b span { flex: none; height: 100%; }

    .mini-bar { position: absolute; left: 735px; top: 389px; width: 140px; height: 46px; box-sizing: border-box; border: 1px solid #8c8c8c; background: #ececec; }
    .logo { position: absolute; left: 0; top: 630px; width: 140px; height: 138px; pointer-events: none; }
  `;

  private icon(name: string) {
    return html`<svg viewBox="0 0 28 28" xmlns="http://www.w3.org/2000/svg">${I[name]}</svg>`;
  }

  private row(items: Item[], cls: string) {
    let right = 0;
    return html`<div class="row ${cls}">
      ${items.map(([cx, raw]) => {
        const combo = raw.startsWith('c:') ? raw.split(':') : null;
        const name = raw.replace(/^[#@]/, '');
        const w = combo ? +combo[2] : WIDTHS[name] ?? 24;
        const left = cx - w / 2;
        const style = `margin-left:${left - right}px;width:${w}px`;
        right = left + w;
        if (combo) {
          return html`<div class="cell" style=${style}><div class="combo" style="width:${w}px">
            <span class="txt">${combo[1]}</span><span class="btn"><i></i></span></div></div>`;
        }
        if (name === 'dd') return html`<div class="cell" style=${style}><span class="dd-arrow"></span></div>`;
        if (name === 'sep' || name === 'grip') return html`<div class="cell ${name}" style=${style}></div>`;
        if (name === 'more') return html`<div class="cell more" style=${style}><span>»</span><span class="dd-arrow"></span></div>`;
        const mod = raw[0] === '#' ? 'boxed' : raw[0] === '@' ? 'active' : '';
        return html`<div class="cell ${mod}" style=${style}>${this.icon(name)}</div>`;
      })}
    </div>`;
  }

  private menuLabel(text: string) {
    const parts = text.split(/([\u4e00-\u9fff]+)/).filter(Boolean);
    return parts.map((p) => /[\u4e00-\u9fff]/.test(p)
      ? html`<span class="zh">${p}</span>`
      : html`${p.split(/(?<=\()(.)(?=\))/).map((s, i) => i % 2 ? html`<u>${s}</u>` : s)}`);
  }

  private menu() {
    return html`<div class="menu">
      <svg class="menu-logo" width="20" height="20" viewBox="0 0 20 20">${fl('M5 5 13 2 17 6V14L9 18 5 14Z', '#2060c8', '#103080')}${fl('M8 7 13 5V12L8 14Z', '#bcd8ff')}</svg>
      <span class="menu-gap"></span>
      ${MENU.map(([x, label], i) => {
        const next = MENU[i + 1] ? MENU[i + 1][0] : x + 96;
        return html`${x === 310 ? html`<span class="menu-sep"></span>` : ''}
          <span class="menu-item" style="width:${next - x}px">${this.menuLabel(label)}</span>`;
      })}
      <div class="mini">
        <span><svg width="11" height="11" viewBox="0 0 11 11">${ln('M1 10H9', '#666', 2)}</svg></span>
        <span><svg width="11" height="11" viewBox="0 0 11 11">${fl('M3 1H10V7H3Z', 'none', '#666', 1.5)}${fl('M1 4H7V10H1Z', '#e4e4e4', '#666', 1.5)}</svg></span>
        <span><svg width="11" height="11" viewBox="0 0 11 11">${ln('M2 2 9 9M9 2 2 9', '#555', 2.2)}</svg></span>
      </div>
    </div>`;
  }

  private scene() {
    return svg`
      <defs>
        <linearGradient id="bl" x1="0" y1="0" x2="1" y2="1"><stop offset="0" stop-color="#f0f5ff"/><stop offset="1" stop-color="#4f86dc"/></linearGradient>
        <linearGradient id="bl2" x1="0" y1="0" x2="1" y2="0"><stop offset="0" stop-color="#f0f5ff"/><stop offset="1" stop-color="#6f90e8"/></linearGradient>
        <linearGradient id="or" x1="0" y1="0" x2="1" y2="1"><stop offset="0" stop-color="#ffe878"/><stop offset="1" stop-color="#f87010"/></linearGradient>
        <linearGradient id="gn" x1="0" y1="0" x2="1" y2="1"><stop offset="0" stop-color="#eef4ee"/><stop offset="1" stop-color="#b8d4b8"/></linearGradient>
        <linearGradient id="rain" x1="0" y1="0" x2="0" y2="1"><stop offset="0" stop-color="#f02010"/><stop offset=".3" stop-color="#f8e020"/><stop offset=".55" stop-color="#20d030"/><stop offset=".8" stop-color="#20d0e0"/><stop offset="1" stop-color="#1020e0"/></linearGradient>
        <linearGradient id="hole" x1="0" y1="0" x2="1" y2="0"><stop offset="0" stop-color="#e86c00"/><stop offset="1" stop-color="#5c2800"/></linearGradient>
        <linearGradient id="cone" gradientUnits="userSpaceOnUse" x1="525" y1="430" x2="650" y2="400">
          <stop offset="0" stop-color="#ff8a08"/><stop offset=".2" stop-color="#ffa428"/><stop offset=".5" stop-color="#ff8410"/><stop offset=".75" stop-color="#cc6400"/><stop offset="1" stop-color="#a84800"/>
        </linearGradient>
      </defs>
      <path d="M401 292 826 202 845 235 778 587 354 677 334 643Z" fill="#ff7f00"/>
      <path d="M826 203 845 235 778 587 761 548Z" fill="#ff6a00"/>
      <path d="M361 640 759 557 773 587 356 673Z" fill="#5f2800"/>
      <path d="M341 645 354 642 353 672Z" fill="#6c3000"/>
      <g fill="none" stroke="#ff6e00" stroke-width="1.6">
        <path d="M401 292 420 325 819 242 826 205"/>
        <path d="M405 294 418 327M421 329 816 247"/>
        <path d="M413 327 353 637M418 330 358 638"/>
        <path d="M337 638 761 548M361 640 759 557"/>
        <path d="M817 247 759 553"/>
        <path d="M761 548 777 585M759 557 773 587"/>
        <path d="M336 643 354 641 353 676M361 640 356 673"/>
      </g>
      <path d="M823 210 762 547" stroke="#ff9010" stroke-width="1.4" fill="none"/>
      <path d="M401 292 826 202 845 235 778 587 354 677 334 643Z" fill="none" stroke="#ff7400" stroke-width="3" stroke-linejoin="round"/>

      ${hole(504, 326)}${rings(513, 347)}
      ${hole(703, 284)}${rings(710, 304)}
      ${hole(459, 558)}${rings(468, 581)}
      ${hole(655, 517)}${rings(667, 538)}
      <path d="M656 508V512M656 522V526M646 517H650M663 517H667" stroke="#ff9020" stroke-width="1.2"/>

      <path d=${smooth(FLANGE)} fill="none" stroke="#ff7000" stroke-width="5"/>
      <path d=${smooth(FLANGE2)} fill="none" stroke="#ff7400" stroke-width="1.5"/>
      <path d="M530 393C548 380 570 368 592 363 610 359 635 360 657 367" fill="none" stroke="#6c2c00" stroke-width="1.8"/>
      <path d=${smooth(CONE)} fill="url(#cone)" stroke="#ff6e00" stroke-width="3"/>
      <ellipse cx="597" cy="451" rx="37" ry="19" transform="rotate(-25 597 451)" fill="#ff8000" stroke="#ff6e00" stroke-width="3"/>
      <path d="M570 446 597 431 628 432 627 448 575 470Z" fill="#a04800"/>
      <path d=${smooth(BORE)} fill="#000"/>
      <ellipse cx="505" cy="445" rx="5" ry="2.6" transform="rotate(-25 505 445)" fill="#7a3800" stroke="#ff6e00" stroke-width="2"/>
      <ellipse cx="664" cy="411" rx="5" ry="2.6" transform="rotate(-25 664 411)" fill="#7a3800" stroke="#ff6e00" stroke-width="2"/>
      <path d="M507 455 517 450 519 460 510 465ZM670 423 676 420 678 428 672 432Z" fill="none" stroke="#ff6e00" stroke-width="2"/>

      <path d="M621 507Q628 522 640 548 627 530 621 507Z" fill="#6f8cf0"/>
      <path d="M647 515Q652 520 640 547 640 530 647 515Z" fill="#f8b0b0"/>
      <path d="M587 560Q612 550 636 550 615 558 587 560Z" fill="#a8e0b0"/>
      <text x="624" y="505" font-size="11" font-family="Liberation Sans" fill="#3848ff">ZC</text>
      <text x="630" y="513" font-size="11" font-family="Liberation Sans" fill="#c83060">XC</text>
      <text x="588" y="574" font-size="11" font-family="Liberation Sans" fill="#20a850">YC</text>

      <path d="M25 663 33 655 50 678 38 682Z" fill="#a8a8b8"/>
      <path d="M39 660 49 680" stroke="#1020e0" stroke-width="1.6"/>
      <path d="M49 680 14 687" stroke="#20a020" stroke-width="1.2"/>
      <circle cx="49" cy="680" r="4" fill="#e8e8e8"/>
      <text x="32" y="654" font-size="11" fill="#1020e0" font-family="Liberation Sans">Z</text>
      <text x="9" y="692" font-size="11" fill="#20a020" font-family="Liberation Sans">Y</text>

      <ellipse cx="808.5" cy="413.5" rx="111.5" ry="67.5" fill="none" stroke="#ed1c24" stroke-width="4.5"/>
    `;
  }

  render() {
    let tabY = 163;
    return html`<div class="app">
      <div class="title">
        <svg width="18" height="18" viewBox="0 0 18 18">${fl('M1 3 8 1 10 9Z', '#e03020')}${fl('M1 15Q10 16 17 2 15 11 9 15T1 15Z', '#f0c020')}${fl('M3 6Q8 11 14 5 11 13 5 12Z', '#2a60d0')}</svg>
        <span class="title-text">NX 8.5 - 建模 - [PLA0127-3D.prt （修改的） ]</span>
        <span class="siemens">SIEMENS</span>
        <span class="winbtn"><svg width="10" height="10" viewBox="0 0 10 10">${ln('M1 9H7', '#fff', 2.4)}</svg></span>
        <span class="winbtn"><svg width="12" height="12" viewBox="0 0 12 12">${fl('M4 1H11V7H4Z', 'none', '#fff', 1.5)}${fl('M1 4H8V11H1Z', '#222', '#fff', 1.5)}</svg></span>
        <span class="winbtn close"><svg width="12" height="12" viewBox="0 0 12 12">${ln('M1 1 11 11M11 1 1 11', '#fff', 2.4)}</svg></span>
      </div>
      ${this.menu()}
      ${this.row(ROW1, 'r1')}
      ${this.row(ROW2, 'r2')}
      ${this.row(ROW3, 'r3')}
      <div class="status">
        <span class="st-left"></span>
        <span class="st-msg">体 (10)  已选定</span>
        <span class="st-cell"></span>
        <span class="st-cell"></span>
        <span class="st-icons">
          <svg class="on" viewBox="0 0 28 28">${I.checker}</svg>
          <svg viewBox="0 0 20 20">${fl('M4 4H16V16H4Z', '#3a80e0', '#223', 1)}${ln('M1 5V1H5M15 1H19V5M1 15V19H5M15 19H19V15', '#333', 1.2)}</svg>
        </span>
      </div>
      <div class="main">
        <svg class="scene" viewBox="0 163 1324 569" xmlns="http://www.w3.org/2000/svg">${this.scene()}</svg>
        <div class="strip"></div>
        <div class="palette">
          ${TABS.map(([y, name]) => {
            const m = y - tabY;
            tabY = y + 40;
            return html`<div class="tab" style="margin-top:${m}px">${this.icon(name)}</div>`;
          })}
        </div>
      </div>
      ${this.row(ROWB, 'rb')}
      <div class="strip-b">
        ${[[107, '#888'], [41, '#f0f0f0'], [50, '#888'], [42, '#f4f4f4'], [142, '#888'], [40, '#d0f0d8'], [944, '#777']].map(([w, c]) => html`<span style="width:${w}px;background:${c}"></span>`)}
      </div>

      <div class="mini-bar">${this.row(POP, 'pop')}</div>

      <svg class="logo" viewBox="0 630 140 138">
        <g fill="none" stroke="#f40000">
          <path stroke-width="12" d="M38 662C16 682 12 718 26 740"/>
          <path stroke-width="8" d="M26 738C32 750 44 756 60 759"/>
          <path stroke-width="7" d="M36 664C50 650 66 645 88 647"/>
          <path stroke-width="5" d="M86 647C96 649 104 654 110 661"/>
          <path stroke-width="3.5" stroke-dasharray="9 2 5 3" d="M108 658C116 668 121 678 122 692"/>
          <path stroke-width="3" stroke-dasharray="4 3" d="M123 712 C124 734 110 752 88 759 78 762 68 761 58 760"/>
        </g>
        <circle cx="69" cy="662" r="6.5" fill="#f40000"/>
        <g fill="none" stroke="#f40000" stroke-width="7">
          <path d="M53 669C62 680 72 678 91 666"/>
          <path d="M66 678C60 686 52 690 44 692" stroke-width="6"/>
          <path d="M67 676C74 684 76 694 76 703"/>
        </g>
        <text x="35" y="719" textLength="82" font-size="17" font-weight="700" font-family="Liberation Sans, Noto Sans CJK SC, sans-serif" fill="#f40000">UG爱好者</text>
        <path d="M26 722H119V734H26Z" fill="#f40000"/>
        <text x="29" y="732" textLength="88" font-size="11" font-weight="700" font-family="Liberation Sans, sans-serif" fill="#fff">WWW.UGSNX.COM</text>
      </svg>
    </div>`;
  }
}
